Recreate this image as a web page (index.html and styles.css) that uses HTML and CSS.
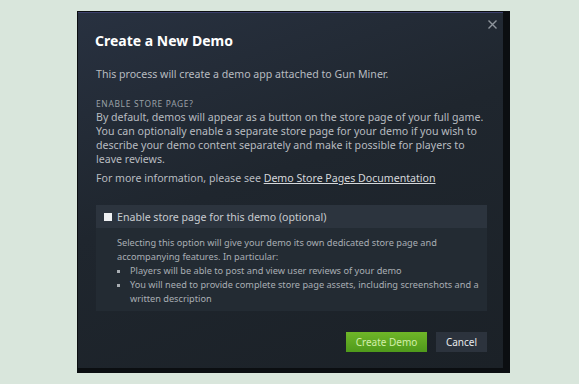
FILE: index.html
```html
<!DOCTYPE html>
<html>
<head>
<meta charset="utf-8">
<link rel="stylesheet" href="styles.css">
</head>
<body>
<div class="frame">
  <div class="dialog">
    <button class="close" aria-label="Close">
      <svg width="9" height="9" viewBox="0 0 9 9"><path d="M0.5 0.5L8.5 8.5M8.5 0.5L0.5 8.5" stroke="#8e959c" stroke-width="1.4" fill="none"/></svg>
    </button>
    <h1 class="title">Create a New Demo</h1>
    <p class="text intro">This process will create a demo app attached to Gun Miner.</p>
    <div class="label">ENABLE STORE PAGE?</div>
    <p class="text">By default, demos will appear as a button on the store page of your full game. You can optionally enable a separate store page for your demo if you wish to describe your demo content separately and make it possible for players to leave reviews.</p>
    <p class="text more">For more information, please see <a class="link" href="#">Demo Store Pages Documentation</a></p>
    <div class="option">
      <label class="option-head"><span class="box"></span>Enable store page for this demo (optional)</label>
      <div class="option-body">
        <p>Selecting this option will give your demo its own dedicated store page and accompanying features. In particular:</p>
        <ul>
          <li>Players will be able to post and view user reviews of your demo</li>
          <li>You will need to provide complete store page assets, including screenshots and a written description</li>
        </ul>
      </div>
    </div>
    <div class="actions">
      <button class="btn primary">Create Demo</button>
      <button class="btn secondary">Cancel</button>
    </div>
  </div>
</div>
</body>
</html>
```
FILE: styles.css
```css
html, body { margin: 0; padding: 0; }
body {
  background: #d9e6dc;
  width: 579px;
  height: 384px;
  overflow: hidden;
  font-family: "Noto Sans", "Open Sans", sans-serif;
}
.frame {
  margin: 11px 0 0 77px;
  width: 433px;
  height: 362px;
  background: #0b0e11;
  padding: 1px 7px 5px 1px;
  box-sizing: border-box;
}
.dialog {
  position: relative;
  height: 100%;
  box-sizing: border-box;
  border-top: 1px solid #3b3f6b;
  background: linear-gradient(160deg, #283140 0%, #1f262e 45%, #1b2127 100%);
  padding: 18px 16px 0 17px;
  display: flex;
  flex-direction: column;
}
.close {
  position: absolute;
  top: 4px;
  right: 4px;
  width: 14px;
  height: 14px;
  padding: 0;
  border: 0;
  background: none;
  display: flex;
  align-items: center;
  justify-content: center;
}
.title {
  margin: 0;
  color: #ffffff;
  font-size: 14px;
  font-weight: 700;
  line-height: 20px;
}
.text {
  margin: 0 0 0 1px;
  color: #b8bcc0;
  font-size: 10.6px;
  line-height: 14px;
}
.intro { margin-top: 16px; }
.label {
  margin: 17px 0 0 1px;
  color: #9aa0a6;
  font-size: 8.4px;
  letter-spacing: 0.7px;
  line-height: 12px;
}
.more { margin-top: 5px; }
.link { color: #d5d8db; text-decoration: underline; }
.option {
  margin: 20px 0 0 1px;
  width: 391px;
  background: #232b33;
}
.option-head {
  display: flex;
  align-items: center;
  height: 23px;
  background: #2c343e;
  padding-left: 8px;
  color: #c8ccd0;
  font-size: 10.6px;
}
.box {
  width: 8px;
  height: 8px;
  background: #eef0f2;
  margin-right: 5px;
}
.option-body {
  padding: 8px 8px 5px 21px;
  color: #a9aeb3;
  font-size: 9.2px;
  line-height: 14px;
}
.option-body p { margin: 0; }
.option-body ul {
  margin: 0;
  padding-left: 13px;
  list-style: square;
}
.actions {
  margin-top: auto;
  margin-bottom: 16px;
  display: flex;
  justify-content: flex-end;
  gap: 9px;
}
.btn {
  height: 20px;
  border: 0;
  font-family: inherit;
  font-size: 10px;
  padding: 0;
}
.primary {
  width: 81px;
  background: linear-gradient(180deg, #6fb628 0%, #4f9a1b 100%);
  color: #d2efa9;
}
.secondary {
  width: 51px;
  background: #2c333d;
  color: #e8eaec;
}
```
